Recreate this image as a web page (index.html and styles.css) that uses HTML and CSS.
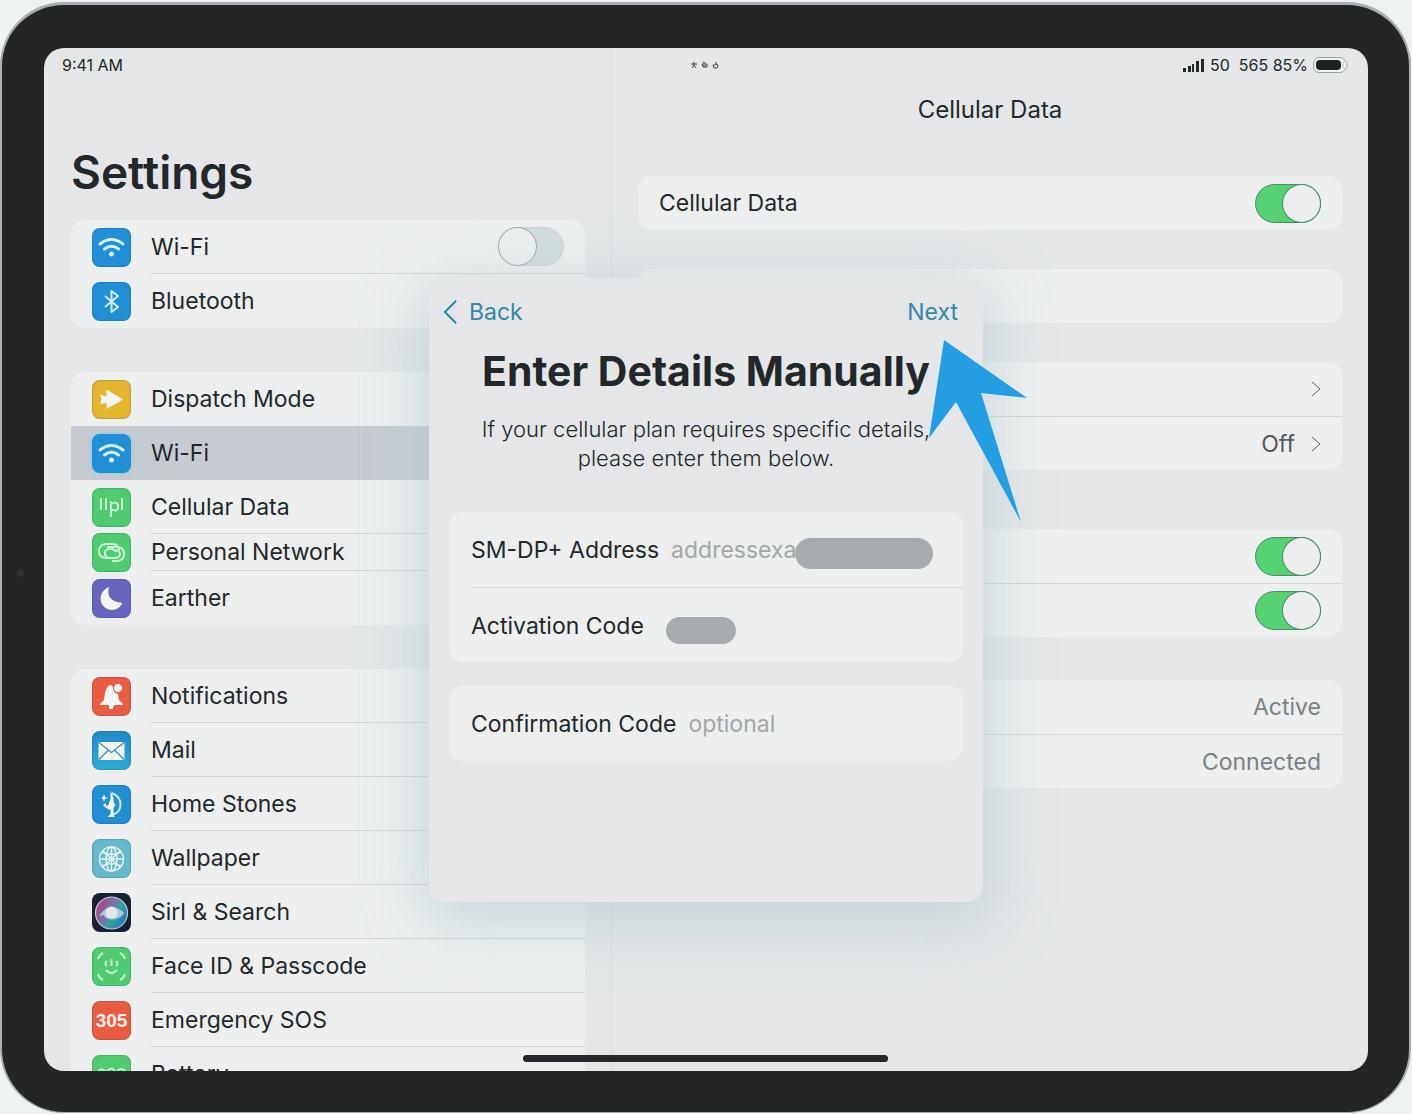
FILE: index.html
```html
<!DOCTYPE html>
<html lang="en">
<head>
<meta charset="utf-8">
<meta name="viewport" content="width=device-width, initial-scale=1">
<title>Settings</title>
<link rel="stylesheet" href="styles.css">
</head>
<body>
<div class="device">
  <div class="screen">
    <header class="status">
      <span class="status-time">9:41 AM</span>
      <svg class="status-dots" viewBox="0 0 28 8" aria-hidden="true"><path d="M3 1v3M0 3h6M1 7l2-3 2 3M12 1l2 1M11 3h5v3h-4zM12 5h3M25 1v2M22 4h2l2-1 1 2-1 2h-3z"/></svg>
      <div class="status-right">
        <svg class="signal" viewBox="0 0 22 14" aria-hidden="true"><path d="M0 10h3v4H0zM5 8h3v6H5zM9 6h2v8H9zM13 3h3v11h-3zM18 1h3v13h-3z"/></svg>
        <span>50&nbsp; 565 85%</span>
        <svg class="battery" viewBox="0 0 35 16" aria-hidden="true"><path d="M6 .5h21q3 0 4 2l3 4v3l-3 4q-1 2-4 2H6Q.500 15 .5 8T6 .5z" fill="#f2f4f4" stroke="#9aa0a2"/><rect x="3" y="3" width="25" height="10" rx="4" fill="#1d2225"/><path d="M30 4.500v7" stroke="#b8bcbd"/></svg>
      </div>
    </header>

    <nav class="sidebar" aria-label="Settings">
      <h1 class="sidebar-title">Settings</h1>
      <ul class="group">
        <li class="row">
          <svg class="icon blue" viewBox="0 0 39 39" aria-hidden="true"><g class="wifi"><path d="M8 16q11.500-9 23 0M12.500 21q7-5.500 14 0"/><circle cx="19.500" cy="26" r="2.500"/></g></svg>
          <label class="row-body" for="wifi-toggle"><span>Wi-Fi</span><input class="toggle" type="checkbox" id="wifi-toggle"></label>
        </li>
        <li class="row">
          <svg class="icon blue" viewBox="0 0 39 39" aria-hidden="true"><path class="line" d="M13 14l13 11-6.500 5V9l6.500 5-13 11"/></svg>
          <a class="row-body" href="#bluetooth">Bluetooth</a>
        </li>
      </ul>
      <ul class="group">
        <li class="row">
          <svg class="icon amber" viewBox="0 0 39 39" aria-hidden="true"><path class="solid" d="M14.500 9.500L31 19.500l-16.500 9.500v-6L8 24l1.500-4.500L8 14.500l6.500 2z"/></svg>
          <a class="row-body" href="#dispatch">Dispatch Mode</a>
        </li>
        <li class="row selected">
          <svg class="icon blue glow" viewBox="0 0 39 39" aria-hidden="true"><g class="wifi"><path d="M8 16q11.500-9 23 0M12.500 21q7-5.500 14 0"/><circle cx="19.500" cy="26" r="2.500"/></g></svg>
          <a class="row-body" href="#wifi" aria-current="page">Wi-Fi</a>
        </li>
        <li class="row plain">
          <svg class="icon green" viewBox="0 0 39 39" aria-hidden="true"><path class="line pale" d="M9 10v12M14 10v12M19 13v16M19 16q7-4 7 2.500T19 21M30 10v12"/></svg>
          <a class="row-body" href="#cellular">Cellular Data</a>
        </li>
        <li class="row short">
          <svg class="icon green" viewBox="0 0 39 39" aria-hidden="true"><path class="line pale" d="M24 25H15q-8 0-8-7t8-7h5q7 0 7 6M15 14h9q8 0 8 7t-8 7h-4M24 19q-2-4-7-3-5 1-4 5t5 4h6q4-1 4-4t-4-4"/></svg>
          <a class="row-body" href="#network">Personal Network</a>
        </li>
        <li class="row">
          <svg class="icon violet" viewBox="0 0 39 39" aria-hidden="true"><path class="solid" d="M17 8q-4 14 13.500 16Q27 31 20 31q-7 0-10.500-6.500Q6 13 17 8z"/></svg>
          <a class="row-body" href="#earther">Earther</a>
        </li>
      </ul>
      <ul class="group">
        <li class="row">
          <svg class="icon red" viewBox="0 0 39 39" aria-hidden="true"><path class="solid" d="M18 8q2 0 3 2 0 6 5 7l1 6 4 4v1H22v2h-1v2h-4v-4H8v-1l4-4 1-7q1-6 5-8z"/><circle class="solid" cx="26" cy="11" r="4.500" stroke="#ea5c42"/></svg>
          <a class="row-body" href="#notifications">Notifications</a>
        </li>
        <li class="row">
          <svg class="icon sky" viewBox="0 0 39 39" aria-hidden="true"><rect class="solid" x="6.500" y="11" width="26" height="18" rx="1"/><path d="M7 11.500l12.500 10 12.500-10M7 28.500l9-9M32 28.500l-9-9" fill="none" stroke="#2b8fc0" stroke-width="1.200"/></svg>
          <a class="row-body" href="#mail">Mail</a>
        </li>
        <li class="row">
          <svg class="icon blue" viewBox="0 0 39 39" aria-hidden="true"><path class="line" d="M20 8q9 4 8.500 12T20 30" stroke-width="1.500"/><path class="solid" d="M18.500 6l1 2 2 5v4l2 3-2 3v6l1 3h-7l3-3v-4q-4-1-5-4l3-1 1-4 1-1zM12 9l1 3 3 1-3 1-1 3-1-3-2-1 2-1zM11 20l3-2v5z"/></svg>
          <a class="row-body" href="#home">Home Stones</a>
        </li>
        <li class="row">
          <svg class="icon teal" viewBox="0 0 39 39" aria-hidden="true"><g fill="none" stroke="#e0f2f4" stroke-width="1.500"><circle cx="19.500" cy="20" r="12"/><ellipse cx="19.500" cy="20" rx="5.500" ry="12"/><path d="M7.500 20h24M19.500 8v24M10 13q9.500 5 19 0M10 27q9.500-5 19 0M11 12l17 16M28 12L11 28"/></g></svg>
          <a class="row-body" href="#wallpaper">Wallpaper</a>
        </li>
        <li class="row">
          <svg class="icon dark" viewBox="0 0 39 39" aria-hidden="true">
            <defs><linearGradient id="orb" x1="0" y1="0.200" x2="1" y2="0.800"><stop offset="0" stop-color="#c23b7e"/><stop offset="0.450" stop-color="#6d78a8"/><stop offset="0.600" stop-color="#3aa39b"/><stop offset="1" stop-color="#1a6fbd"/></linearGradient></defs>
            <circle cx="19.500" cy="20" r="16" fill="url(#orb)" stroke="#b8cfe0" stroke-width="1.200"/><path d="M7 23q5-8 12.500-9 8 1 13 6-6 7-13 6.500-6-.5-8-4.500z" fill="#bcd6e4" opacity=".85"/><circle cx="19.500" cy="19.500" r="6" fill="#e3e8ef"/></svg>
          <a class="row-body" href="#search">Sirl &amp; Search</a>
        </li>
        <li class="row">
          <svg class="icon green" viewBox="0 0 39 39" aria-hidden="true"><path class="line pale" d="M6 12q1-4 5-6M28 6q4 2 5 6M6 27q1 4 5 6M28 33q4-2 5-6M19.500 12v7M15 14q-3 3 0 5M24 14q3 3 0 5M14 23q5.500 6 11 0"/></svg>
          <a class="row-body" href="#faceid">Face ID &amp; Passcode</a>
        </li>
        <li class="row">
          <span class="icon red icon-text" aria-hidden="true">305</span>
          <a class="row-body" href="#sos">Emergency SOS</a>
        </li>
        <li class="row">
          <svg class="icon green" viewBox="0 0 39 39" aria-hidden="true"><path class="line pale" d="M6 17q3-5 7-1t0 6-7-1M15 16q5-5 8 0t-2 6-6-2M25 16q5-4 8 0v8" stroke-width="3"/></svg>
          <a class="row-body" href="#battery">Battery</a>
        </li>
      </ul>
    </nav>

    <main class="detail">
      <h2 class="detail-title">Cellular Data</h2>
      <section class="card">
        <label class="card-row"><span>Cellular Data</span><input class="toggle" type="checkbox" checked></label>
      </section>
      <section class="card"><div class="card-row"></div></section>
      <section class="card">
        <a class="card-row end" href="#options" aria-label="Options"><svg class="chevron" viewBox="0 0 10 16" aria-hidden="true"><path d="M1 1l8 7-8 7"/></svg></a>
        <a class="card-row end" href="#roaming"><span class="value-dark">Off</span><svg class="chevron" viewBox="0 0 10 16" aria-hidden="true"><path d="M1 1l8 7-8 7"/></svg></a>
      </section>
      <section class="card spaced">
        <div class="card-row end"><input class="toggle" type="checkbox" checked aria-label="First line"></div>
        <div class="card-row end"><input class="toggle" type="checkbox" checked aria-label="Second line"></div>
      </section>
      <section class="card">
        <div class="card-row end">Active</div>
        <div class="card-row end">Connected</div>
      </section>
    </main>

    <form class="modal" role="dialog" aria-labelledby="modal-title">
      <div class="modal-bar">
        <button class="link-button" type="button"><svg class="back-arrow" viewBox="0 0 16 26" aria-hidden="true"><path d="M14 1L2 13l12 12"/></svg>Back</button>
        <button class="link-button" type="button">Next</button>
      </div>
      <h2 class="modal-title" id="modal-title">Enter Details Manually</h2>
      <p class="modal-text">If your cellular plan requires specific details,<br>please enter them below.</p>
      <div class="fields">
        <div class="field">
          <label for="address">SM-DP+ Address</label>
          <div class="field-value"><input type="text" id="address" placeholder="addressexa"><span class="mask mask-wide"></span></div>
        </div>
        <div class="field">
          <label for="activation">Activation Code</label>
          <div class="field-value"><input type="text" id="activation"><span class="mask"></span></div>
        </div>
      </div>
      <div class="fields">
        <div class="field">
          <label for="confirmation">Confirmation Code</label>
          <div class="field-value"><input type="text" id="confirmation" placeholder="optional"></div>
        </div>
      </div>
      <svg class="pointer" viewBox="0 0 98 182" aria-hidden="true"><path d="M15 0l83 58-46-5 40 129L27 62 0 98z"/></svg>
    </form>
    <div class="home-bar"></div>
  </div>
</div>
</body>
</html>
```
FILE: styles.css
```css
* { box-sizing: border-box; }

body {
  margin: 0;
  height: 100vh;
  padding: 2px 1px 1px 0;
  background: #eef2f3;
  color: #22282a;
  font: 400 23px/28px Inter, "Liberation Sans", sans-serif;
  overflow: hidden;
}

h1, h2, p, ul { margin: 0; padding: 0; }
ul { list-style: none; }
a { color: inherit; text-decoration: none; }

.device {
  position: relative;
  height: 100%;
  padding: 43px 41px 41px 42px;
  border: 2px solid #a9aeb0;
  border-top-width: 3px;
  border-bottom-width: 1px;
  border-radius: 64px;
  background: #232625;
}

.device::before {
  content: "";
  position: absolute;
  left: 15px;
  top: 51%;
  width: 7px;
  height: 7px;
  border-radius: 50%;
  background: #2e3335;
}

.screen {
  position: relative;
  display: grid;
  grid-template: 34px 1fr / 568px 1fr;
  height: 100%;
  border-radius: 20px;
  background: #e4e6e7;
  overflow: hidden;
}

.status {
  grid-area: 1 / 1 / 2 / 3;
  display: grid;
  grid-template-columns: 1fr auto 1fr;
  align-items: center;
  padding: 0 20px 0 18px;
  font-size: 16px;
  line-height: 20px;
}
.status-dots { width: 28px; height: 8px; fill: none; stroke: #3f4547; }
.status-right { display: flex; justify-content: flex-end; align-items: center; gap: 5px; }
.signal { width: 22px; height: 14px; fill: #252a2d; }
.battery { width: 35px; height: 16px; }

.sidebar {
  grid-area: 1 / 1 / 3 / 2;
  min-height: 0;
  padding: 94px 26px 0 27px;
  border-right: 1px solid #d6dbdd;
  overflow: hidden;
}
.sidebar-title { margin-bottom: 18px; font-size: 46px; font-weight: 600; line-height: 60px; }

.group { margin-bottom: 44px; border-radius: 14px; background: #edefef; }
.row { display: flex; align-items: center; gap: 20px; height: 54px; padding-left: 21px; }
.row.short { height: 37px; }
.row-body {
  display: flex;
  flex: 1;
  align-items: center;
  justify-content: space-between;
  align-self: stretch;
  padding-right: 21px;
  border-bottom: 1px solid #cfd3d4;
}
.row:last-child .row-body { border-bottom: 0; }
.row:has(+ .selected) .row-body, .selected .row-body { border-bottom: 0; }
.selected { background: #c6cbd1; }

.icon { flex: none; width: 39px; height: 39px; border-radius: 8px; box-shadow: inset 0 0 1px 1px #00406030; }
.icon-text {
  color: #fbeeea;
  font: 700 19px/39px "Liberation Sans", Arial, sans-serif;
  text-align: center;
}
.blue { background: #218fd3; }
.glow { box-shadow: 0 0 4px #7cc8ee; }
.amber { background: #e5b52e; }
.green { background: #50cb70; }
.violet { background: #6765bd; }
.red { background: #ea5c42; }
.sky { background: linear-gradient(#2188c8, #2bacd0); }
.teal { background: #65b9c8; }
.dark { background: #1b2030; }
.wifi path { fill: none; stroke: #d5f2fb; stroke-width: 3; stroke-linecap: round; }
.wifi circle { fill: #d5f2fb; }
.line { fill: none; stroke: #cdeefa; stroke-width: 2; stroke-linejoin: round; }
.pale { stroke: #c5f2d0; }
.solid { fill: #f4f6f6; }

.toggle {
  appearance: none;
  flex: none;
  display: flex;
  width: 66px;
  height: 39px;
  margin: 0;
  border: 1px solid #c9d4d5;
  border-radius: 20px;
  background: #d2dcdd;
}
.toggle::before {
  content: "";
  width: 37px;
  height: 37px;
  border-radius: 50%;
  background: #eceeee;
  box-shadow: 0 0 0 1px #a4acad;
}
.toggle:checked { justify-content: flex-end; border-color: #4a8e67; background: #56d173; }
.toggle:checked::before { box-shadow: 0 0 0 1px #4a8e67; }

.detail { grid-area: 1 / 2 / 3 / 3; padding: 48px 26px 0; }
.detail-title { margin-bottom: 52px; font-size: 24px; font-weight: 400; text-align: center; }
.card { margin-bottom: 39px; border-radius: 14px; background: #edefef; }
.card:nth-of-type(3) { margin-bottom: 59px; }
.card.spaced { margin-bottom: 43px; }
.card-row {
  display: flex;
  align-items: center;
  justify-content: space-between;
  height: 54px;
  padding: 0 21px;
  color: #22282a;
}
.card-row + .card-row { border-top: 1px solid #d0d4d5; }
.card-row.end { justify-content: flex-end; gap: 16px; color: #7b8183; }
.card-row .value-dark { color: #53595b; }
.chevron { width: 10px; height: 16px; fill: none; stroke: #5a6062; }

.modal {
  position: absolute;
  top: 230px;
  left: 50%;
  width: 554px;
  height: 624px;
  margin-left: -277px;
  padding: 16px 20px;
  border-radius: 16px;
  background: #e4e6e7;
  box-shadow: 0 14px 60px 6px #b4cbd0b0;
}
.modal-bar { display: flex; justify-content: space-between; height: 36px; margin: 0 5px 0 -6px; }
.link-button {
  display: flex;
  align-items: center;
  gap: 11px;
  padding: 0;
  border: 0;
  background: none;
  color: #3089a8;
  font: inherit;
}
.back-arrow { width: 15px; height: 26px; fill: none; stroke: #2484a8; stroke-width: 2; }
.modal-title { margin-top: 18px; font-size: 41px; font-weight: 700; line-height: 46px; text-align: center; white-space: nowrap; }
.modal-text { margin: 21px 0 39px; font-size: 22px; font-weight: 300; line-height: 29px; text-align: center; white-space: nowrap; }
.fields { margin-bottom: 24px; border-radius: 14px; background: #edefef; }
.field { display: flex; align-items: center; gap: 12px; height: 75px; margin-left: 22px; }
.field + .field { padding-top: 2px; border-top: 1px solid #cfd3d4; }
.field-value { position: relative; flex: 1; }
.field-value input {
  display: block;
  width: 100%;
  padding: 0;
  border: 0;
  outline: 0;
  background: none;
  color: inherit;
  font: inherit;
}
.field-value input::placeholder { color: #a1a7a9; opacity: 1; }
.mask { position: absolute; top: 5px; left: 10px; width: 70px; height: 27px; border-radius: 16px; background: #a6abae; }
.mask-wide { top: 2px; right: 30px; left: auto; width: 138px; height: 31px; }
.pointer { position: absolute; top: 62px; left: 500px; width: 98px; height: 182px; fill: #249ee3; }

.home-bar {
  position: absolute;
  bottom: 9px;
  left: 50%;
  width: 365px;
  height: 7px;
  margin-left: -183px;
  border-radius: 4px;
  background: #25282b;
}
```
